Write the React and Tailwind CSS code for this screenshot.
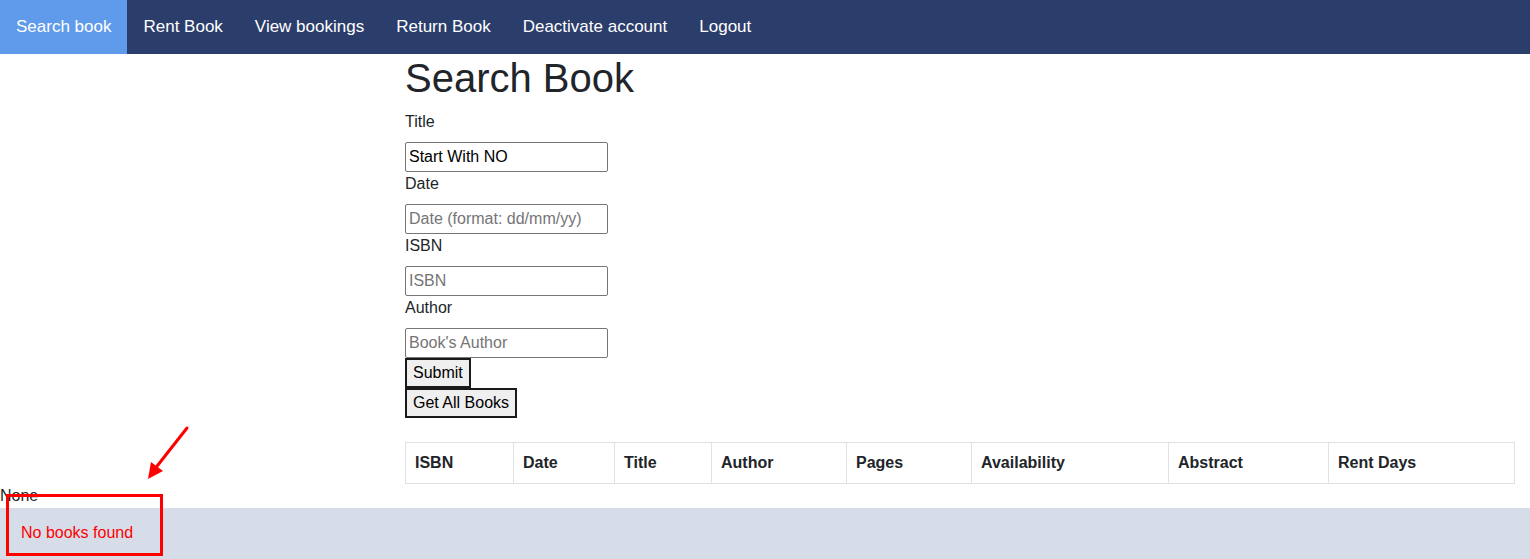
export default function App() {
  const navItems = ["Search book", "Rent Book", "View bookings", "Return Book", "Deactivate account", "Logout"];
  const columns = [
    ["ISBN", "w-[108px]"],
    ["Date", "w-[101px]"],
    ["Title", "w-[97px]"],
    ["Author", "w-[135px]"],
    ["Pages", "w-[125px]"],
    ["Availability", "w-[197px]"],
    ["Abstract", "w-[160px]"],
    ["Rent Days", "w-[186px]"],
  ];

  const fields = [
    { label: "Title", value: "Start With NO", placeholder: "" },
    { label: "Date", value: "", placeholder: "Date (format: dd/mm/yy)" },
    { label: "ISBN", value: "", placeholder: "ISBN" },
    { label: "Author", value: "", placeholder: "Book's Author" },
  ];

  return (
    <div className="relative min-h-[559px] bg-white text-[#212529] font-['Liberation_Sans',Arial,sans-serif] text-[16px] leading-6">
      {/* Navbar */}
      <nav className="flex h-[54px] bg-[#2b3d6b]">
        {navItems.map((item, i) => (
          <a
            key={item}
            className={
              "flex items-center px-4 text-[17px] text-white " + (i === 0 ? "bg-[#5f9bea]" : "")
            }
          >
            {item}
          </a>
        ))}
      </nav>

      {/* Search form */}
      <div className="ml-[405px] w-[1110px]">
        <h1 className="mb-2 text-[40px] leading-[48px] font-normal">Search Book</h1>
        {fields.map((f) => (
          <div key={f.label}>
            <label className="mb-2 block">{f.label}</label>
            <input
              defaultValue={f.value}
              placeholder={f.placeholder}
              className="block h-[30px] w-[203px] rounded-[2px] border border-[#767676] px-[3px] text-[16px] text-black placeholder:text-[#757575]"
            />
          </div>
        ))}
        <button className="block h-[30px] border-2 border-[#1a1a1a] bg-[#efefef] px-[6px] text-black">Submit</button>
        <button className="block h-[30px] border-2 border-[#1a1a1a] bg-[#efefef] px-[6px] text-black">Get All Books</button>

        <table className="mt-6 w-[1109px] table-fixed border-collapse">
          <thead>
            <tr>
              {columns.map(([name, w]) => (
                <th key={name} className={"border border-[#dee2e6] px-[9px] py-2 text-left font-bold " + w}>
                  {name}
                </th>
              ))}
            </tr>
          </thead>
        </table>
      </div>

      <div className="h-6">None</div>

      {/* Footer */}
      <div className="bg-[#d6dce8] px-[21px] pt-[13px] pb-[14px] text-[#ff0000]">No books found</div>

      {/* Annotation overlay */}
      <div className="pointer-events-none absolute left-[6px] top-[494px] h-[62px] w-[157px] border-[3px] border-[#ff0000]" />
      <svg className="pointer-events-none absolute left-[140px] top-[424px]" width="56" height="60" viewBox="0 0 56 60">
        <line x1="47" y1="4" x2="14" y2="46" stroke="#ff0000" strokeWidth="3" strokeLinecap="round" />
        <polygon points="8,55 11,38 23,47" fill="#ff0000" />
      </svg>
    </div>
  );
}
